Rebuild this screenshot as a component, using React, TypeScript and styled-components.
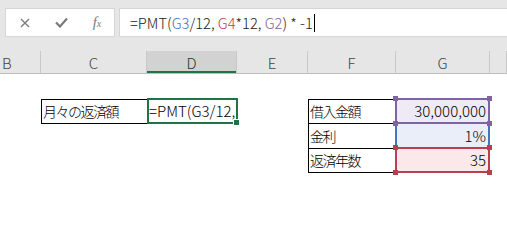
import styled, { createGlobalStyle, css } from 'styled-components';

const GlobalStyle = createGlobalStyle`
  html, body {
    margin: 0;
    padding: 0;
    background: #ffffff;
    overflow: hidden;
  }
  body {
    font-family: 'Noto Sans CJK JP', 'Noto Sans', sans-serif;
    font-weight: 300;
    color: #000;
  }
`;

const COLS = '41px 106px 90px 71px 88px 94px 1fr';

const refColors = {
  purple: { line: '#8064a2', fill: '#efebf6' },
  blue: { line: '#4472c4', fill: '#e9eef8' },
  red: { line: '#b8404e', fill: '#fae8ea' },
};

type RefColor = keyof typeof refColors;

export default function App() {
  return (
    <>
      <GlobalStyle />
      <Page>
        <Toolbar>
          <ButtonBox>
            <IconButton>
              <svg width='10' height='10' viewBox='0 0 10 10'>
                <path d='M1 1 L9 9 M9 1 L1 9' stroke='#7b7b7b' strokeWidth='1.4' />
              </svg>
            </IconButton>
            <IconButton>
              <svg width='13' height='11' viewBox='0 0 13 11'>
                <path d='M1 5.5 L5 9.5 L12 1.5' stroke='#7b7b7b' strokeWidth='2.2' fill='none' />
              </svg>
            </IconButton>
            <IconButton>
              <Fx>
                f<small>x</small>
              </Fx>
            </IconButton>
          </ButtonBox>
          <FormulaBox>
            <span>=PMT(</span>
            <Ref $c='blue'>G3</Ref>
            <span>/12, </span>
            <Ref $c='red'>G4</Ref>
            <span>*12, </span>
            <Ref $c='purple'>G2</Ref>
            <span>) * -1</span>
            <Caret />
          </FormulaBox>
        </Toolbar>

        <HeaderRow>
          {['B', 'C', 'D', 'E', 'F', 'G', ''].map((c) => (
            <HeaderCell key={c} $active={c === 'D'}>
              {c}
            </HeaderCell>
          ))}
        </HeaderRow>

        <Sheet>
          <Cell $col={2} $row={2} $boxed>
            <Jp>月々の返済額</Jp>
          </Cell>
          <Cell $col={3} $row={2} $selected>
            <Clip>=PMT(G3/12,</Clip>
            <FillHandle />
          </Cell>

          <Cell $col={5} $row={2} $boxed>
            <Jp>借入金額</Jp>
          </Cell>
          <Cell $col={5} $row={3} $boxed>
            <Jp>金利</Jp>
          </Cell>
          <Cell $col={5} $row={4} $boxed>
            <Jp>返済年数</Jp>
          </Cell>

          <Cell $col={6} $row={3} $ref='blue' $sidesOnly $right>
            1%
          </Cell>
          <Cell $col={6} $row={2} $ref='purple' $right>
            30,000,000
            <Corner $c='purple' $v='top' $h='left' />
            <Corner $c='purple' $v='top' $h='right' />
            <Corner $c='purple' $v='bottom' $h='left' />
            <Corner $c='purple' $v='bottom' $h='right' />
          </Cell>
          <Cell $col={6} $row={4} $ref='red' $right>
            35
            <Corner $c='red' $v='top' $h='left' />
            <Corner $c='red' $v='top' $h='right' />
            <Corner $c='red' $v='bottom' $h='left' />
            <Corner $c='red' $v='bottom' $h='right' />
          </Cell>
        </Sheet>
      </Page>
    </>
  );
}

const Page = styled.div`
  width: 507px;
  height: 249px;
  display: flex;
  flex-direction: column;
`;

const Toolbar = styled.div`
  height: 48px;
  box-sizing: border-box;
  padding: 8px 0 0 5px;
  background: #e6e6e6;
  display: flex;
  align-items: flex-start;
  gap: 4px;
`;

const ButtonBox = styled.div`
  width: 110px;
  height: 29px;
  box-sizing: border-box;
  background: #fff;
  border: 1px solid #d6d6d6;
  display: flex;
  align-items: center;
  padding-left: 8px;
  gap: 14px;
`;

const IconButton = styled.div`
  width: 22px;
  height: 22px;
  display: flex;
  align-items: center;
  justify-content: center;
`;

const Fx = styled.span`
  font-family: 'Liberation Serif', serif;
  font-style: italic;
  font-size: 15px;
  color: #7b7b7b;

  small {
    font-size: 10px;
  }
`;

const FormulaBox = styled.div`
  flex: 1;
  height: 29px;
  box-sizing: border-box;
  background: #fff;
  border: 1px solid #d6d6d6;
  border-right: none;
  display: flex;
  align-items: center;
  padding-left: 10px;
  font-size: 14.7px;
  white-space: pre;
  color: #222;
`;

const Ref = styled.span<{ $c: RefColor }>`
  color: ${({ $c }) => refColors[$c].line};
`;

const Caret = styled.span`
  width: 1px;
  height: 18px;
  background: #000;
  margin-left: 1px;
`;

const HeaderRow = styled.div`
  height: 26px;
  box-sizing: border-box;
  background: #e6e6e6;
  border-bottom: 1px solid #bdbdbd;
  display: grid;
  grid-template-columns: ${COLS};
`;

const HeaderCell = styled.div<{ $active?: boolean }>`
  display: flex;
  align-items: center;
  justify-content: center;
  font-size: 15px;
  color: #444;
  border-right: 1px solid #c9c9c9;
  margin-top: 3px;
  &:first-child {
    justify-content: flex-start;
    padding-left: 2px;
  }
  ${({ $active }) =>
    $active &&
    css`
      background: #d2d2d2;
      color: #2f2f2f;
      box-shadow: inset 0 -2px 0 #217346;
    `}
`;

const Sheet = styled.div`
  flex: 1;
  display: grid;
  grid-template-columns: ${COLS};
  grid-template-rows: 25px 24px 25px 24px 25px 24px 25px;
`;

const Cell = styled.div<{
  $col: number;
  $row: number;
  $boxed?: boolean;
  $selected?: boolean;
  $ref?: RefColor;
  $sidesOnly?: boolean;
  $right?: boolean;
}>`
  grid-column: ${({ $col }) => $col};
  grid-row: ${({ $row }) => $row};
  position: relative;
  display: flex;
  align-items: flex-end;
  justify-content: ${({ $right }) => ($right ? 'flex-end' : 'flex-start')};
  padding: 0 4px 2px 2px;
  min-width: 0;
  font-size: 15px;
  line-height: 20px;
  white-space: nowrap;

  ${({ $boxed }) =>
    $boxed &&
    css`
      &::before {
        content: '';
        position: absolute;
        top: 0;
        left: 0;
        right: -1px;
        bottom: -1px;
        border: 1px solid #000;
        pointer-events: none;
      }
    `}

  ${({ $selected }) =>
    $selected &&
    css`
      padding: 0 0 2px 1px;
      &::before {
        content: '';
        position: absolute;
        top: -1px;
        left: 0;
        right: -1px;
        bottom: -1px;
        border: 2px solid #217346;
        z-index: 1;
      }
    `}

  ${({ $ref, $sidesOnly }) =>
    $ref &&
    css`
      background: ${refColors[$ref].fill};
      &::after {
        content: '';
        position: absolute;
        top: -1px;
        left: -1px;
        right: 0;
        bottom: -1px;
        border: 2px solid ${refColors[$ref].line};
        ${$sidesOnly && 'border-top: none; border-bottom: none; top: 0; bottom: 0;'}
      }
    `}
`;

const Clip = styled.span`
  display: block;
  overflow: hidden;
  width: 100%;
  padding-left: 1px;
`;

const Jp = styled.span`
  font-size: 14px;
  letter-spacing: -1.5px;
`;

const FillHandle = styled.span`
  position: absolute;
  right: -2px;
  bottom: -2px;
  width: 5px;
  height: 5px;
  background: #217346;
  border-left: 1px solid #fff;
  border-top: 1px solid #fff;
  z-index: 2;
`;

const Corner = styled.span<{ $c: RefColor; $v: 'top' | 'bottom'; $h: 'left' | 'right' }>`
  position: absolute;
  ${({ $v }) => ($v === 'top' ? 'top: -3px;' : 'bottom: -3px;')}
  ${({ $h }) => ($h === 'left' ? 'left: -3px;' : 'right: -2px;')}
  width: 5px;
  height: 5px;
  background: ${({ $c }) => refColors[$c].line};
  z-index: 2;
`;
